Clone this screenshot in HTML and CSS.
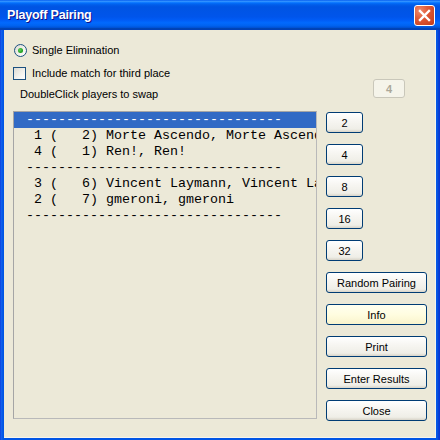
FILE: index.html
```html
<!DOCTYPE html>
<html>
<head>
<meta charset="utf-8">
<link rel="stylesheet" href="styles.css">
</head>
<body>
<div class="window">
  <div class="titlebar">
    <span class="title">Playoff Pairing</span>
    <span class="close">
      <svg width="21" height="21" viewBox="0 0 21 21"><path d="M6 6 L15 15 M15 6 L6 15" stroke="#fff" stroke-width="2.4" stroke-linecap="square"/></svg>
    </span>
  </div>
  <div class="client">
    <div class="top">
      <div class="options">
        <div class="opt"><span class="radio"><span class="dot"></span></span><span class="radio-label">Single Elimination</span></div>
        <div class="opt opt-check"><span class="check"></span><span class="check-label">Include match for third place</span></div>
        <div class="hint">DoubleClick players to swap</div>
      </div>
      <div class="btn btn-disabled">4</div>
    </div>
    <div class="main">
      <div class="list">
        <div class="row sel"> --------------------------------</div>
        <div class="row">  1 (   2) Morte Ascendo, Morte Ascendo</div>
        <div class="row">  4 (   1) Ren!, Ren!</div>
        <div class="row"> --------------------------------</div>
        <div class="row">  3 (   6) Vincent Laymann, Vincent Laymann</div>
        <div class="row">  2 (   7) gmeroni, gmeroni</div>
        <div class="row"> --------------------------------</div>
      </div>
      <div class="buttons">
        <div class="btn btn-small">2</div>
        <div class="btn btn-small">4</div>
        <div class="btn btn-small">8</div>
        <div class="btn btn-small">16</div>
        <div class="btn btn-small">32</div>
        <div class="btn btn-wide">Random Pairing</div>
        <div class="btn btn-wide btn-info">Info</div>
        <div class="btn btn-wide">Print</div>
        <div class="btn btn-wide">Enter Results</div>
        <div class="btn btn-wide">Close</div>
      </div>
    </div>
  </div>
</div>
</body>
</html>
```

FILE: styles.css
```css
html, body {
  margin: 0;
  padding: 0;
}
body {
  width: 440px;
  height: 440px;
  overflow: hidden;
  font-family: "Liberation Sans", Arial, sans-serif;
  font-size: 11px;
}
.window {
  width: 440px;
  height: 440px;
  box-sizing: border-box;
  display: flex;
  flex-direction: column;
  background: linear-gradient(to right, #0831d9 0px, #1662ee 1px, #0a5ce9 2px, #0055e5 3px, #0055e5 436px, #0a5ce9 437px, #0848d4 438px, #0831d9 440px);
  padding: 0 4px 4px 4px;
}
.titlebar {
  height: 30px;
  margin: 0 -4px;
  flex: none;
  display: flex;
  align-items: center;
  padding: 0 5px 0 7px;
  background: linear-gradient(to bottom, #0058ee 0%, #3593ff 4%, #288eff 6%, #127dff 8%, #036ffc 10%, #0262ee 14%, #0057e5 20%, #0054e3 24%, #0055eb 56%, #005bf5 66%, #026afe 76%, #0062ef 86%, #0052d6 92%, #0040ab 96%, #0040c0 100%);
}
.title {
  flex: 1;
  color: #fff;
  font-weight: bold;
  font-size: 12.5px;
  letter-spacing: -0.2px;
  text-shadow: 1px 1px #0f1089;
}
.close {
  width: 21px;
  height: 21px;
  box-sizing: border-box;
  border: 1px solid #fff;
  border-radius: 3px;
  background: radial-gradient(circle at 25% 25%, #f08a6c 0%, #e05a38 40%, #cc4523 80%, #b83a1a 100%);
  display: flex;
  align-items: center;
  justify-content: center;
  margin-top: 1px;
}
.close svg {
  display: block;
  margin: -1px;
}
.client {
  flex: 1;
  background: #ece9d8;
  display: flex;
  flex-direction: column;
  box-shadow: inset -1px -1px 0 #f6f4ec;
}
.top {
  display: flex;
  height: 81px;
  box-sizing: border-box;
  padding-top: 12px;
}
.options {
  flex: 1;
  display: flex;
  flex-direction: column;
}
.opt {
  height: 16px;
  display: flex;
  align-items: center;
  padding-left: 10px;
}
.opt-check {
  margin-top: 7px;
  padding-left: 9px;
}
.radio {
  width: 13px;
  height: 13px;
  box-sizing: border-box;
  border: 1px solid #1c5180;
  border-radius: 50%;
  background: linear-gradient(135deg, #dcdbd3 0%, #f4f3ee 60%, #ffffff 100%);
  display: flex;
  align-items: center;
  justify-content: center;
}
.dot {
  width: 5px;
  height: 5px;
  border-radius: 50%;
  background: radial-gradient(circle at 40% 40%, #5fd35f 0%, #21a121 60%, #1a8a1a 100%);
}
.radio-label {
  margin-left: 5px;
}
.check {
  width: 13px;
  height: 13px;
  box-sizing: border-box;
  border: 1px solid #1c5180;
  background: linear-gradient(135deg, #dcdbd3 0%, #f4f3ee 60%, #ffffff 100%);
}
.check-label {
  margin-left: 6px;
}
.hint {
  margin-top: 6px;
  height: 14px;
  line-height: 14px;
  padding-left: 16px;
}
.btn {
  box-sizing: border-box;
  border: 1px solid #003c74;
  border-radius: 3px;
  background: linear-gradient(to bottom, #ffffff 0%, #f7f6f2 40%, #efeee7 85%, #d8d4c8 100%);
  display: flex;
  align-items: center;
  justify-content: center;
  color: #000;
  font-size: 11px;
}
.btn-disabled {
  width: 32px;
  height: 19px;
  margin-top: 37px;
  margin-right: 31px;
  border-color: #c9c7ba;
  background: #f5f4ea;
  color: #aca899;
  font-weight: bold;
}
.main {
  flex: 1;
  display: flex;
  padding: 0 9px 17px 9px;
  gap: 9px;
}
.list {
  width: 304px;
  height: 308px;
  box-sizing: border-box;
  border: 1px solid #a5a5a5;
  border-right-color: #b9b9b9;
  border-bottom-color: #b9b9b9;
  overflow: hidden;
  background: #ece9d8;
  font-family: "Liberation Mono", "Courier New", monospace;
  font-size: 13.333px;
}
.row {
  height: 16px;
  line-height: 16px;
  white-space: pre;
  padding-left: 4px;
  color: #000;
  overflow: hidden;
}
.row.sel {
  background: #316ac5;
  color: #fff;
}
.buttons {
  width: 101px;
  padding-top: 1px;
  display: flex;
  flex-direction: column;
  gap: 11px;
}
.btn-small {
  width: 37px;
  height: 21px;
}
.btn-wide {
  width: 101px;
  height: 21px;
}
.btn-info {
  background: linear-gradient(to bottom, #fffff0 0%, #fffde0 50%, #faf4cc 100%);
}
```
